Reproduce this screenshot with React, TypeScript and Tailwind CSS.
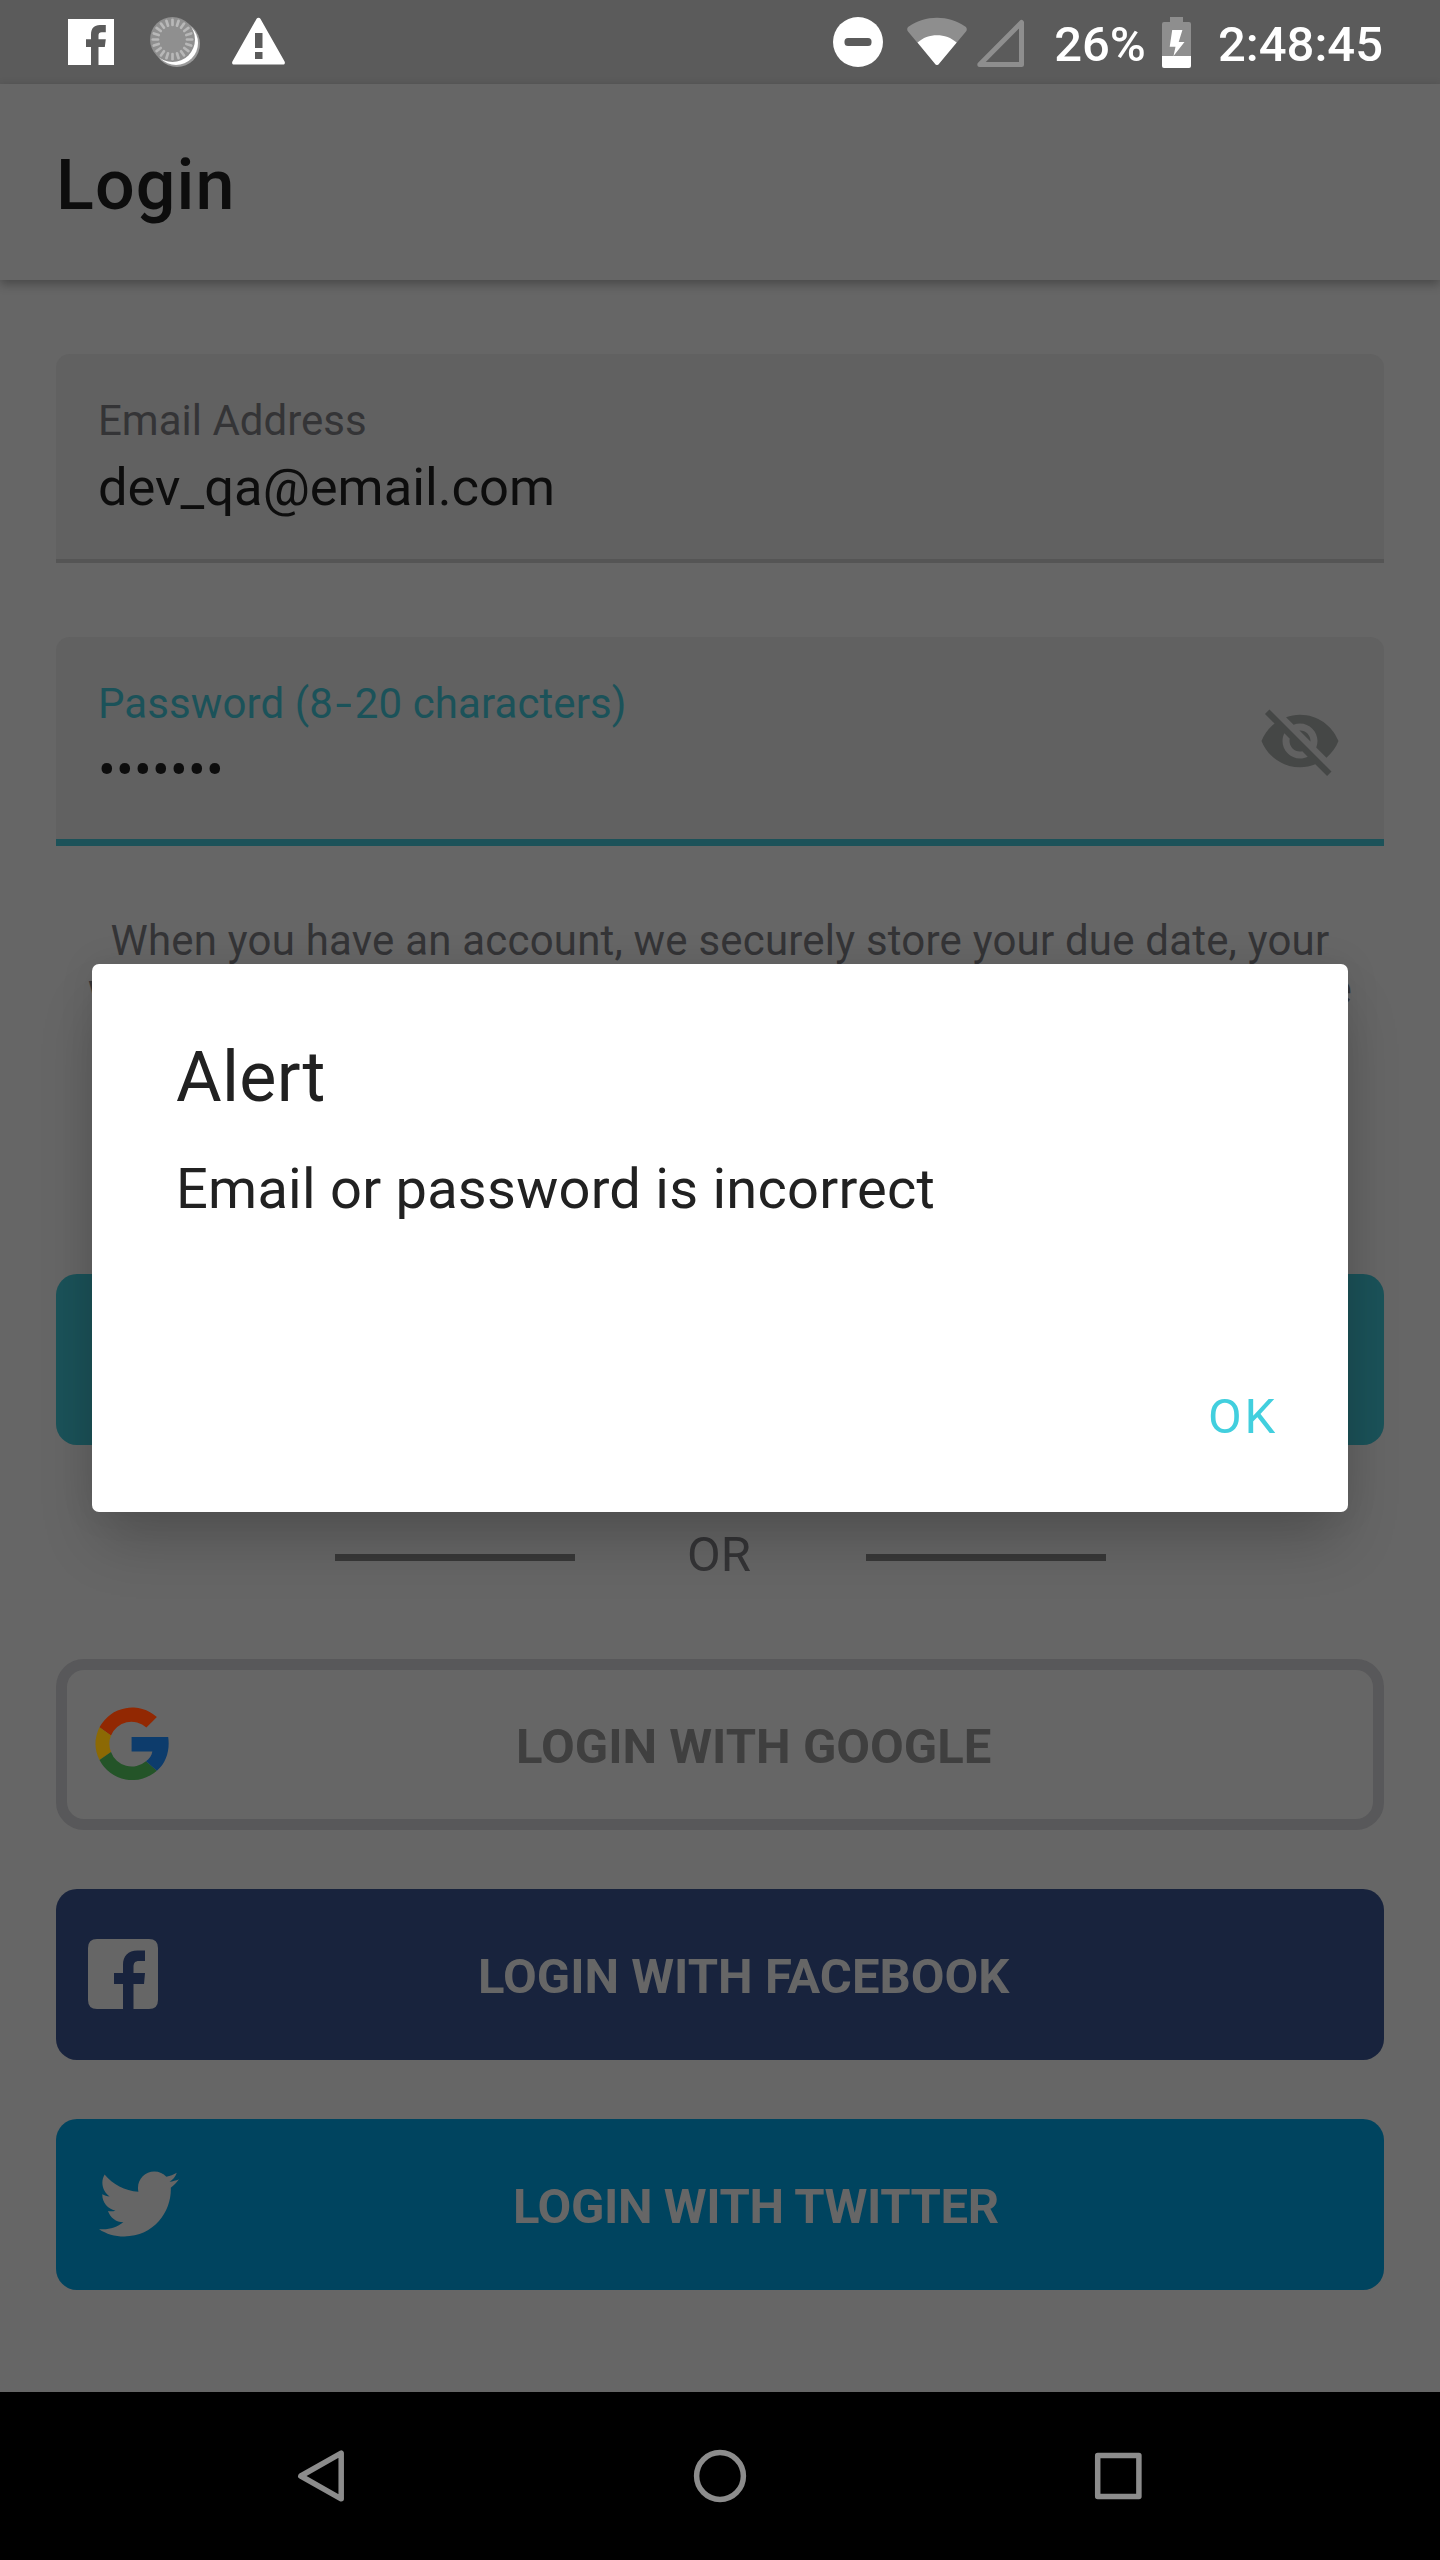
import type { ReactNode } from "react";
import { FaTwitter } from "react-icons/fa";

const TICKS = Array.from({ length: 20 }, (_, i) => i * 18);

function StatusBar() {
  return (
    <div className="flex h-[84px] shrink-0 items-center justify-between bg-[#5b5b5b] pl-[68px] pr-[57px] text-white">
      <div className="flex items-center">
        <svg className="size-[46px]" viewBox="0 0 46 46" fill="#fff">
          <path
            fillRule="evenodd"
            d="M0 0H46V46H30.5V28H36.8L37.8 20.3H30.5V16.5C30.5 14.3 31.5 13.3 33.8 13.3H37.8V6H32C26 6 23 9.5 23 15.5V20.3H18V28H23V46H0Z"
          />
        </svg>
        <svg className="ml-9 size-[50px]" viewBox="0 0 50 50">
          <circle cx="27" cy="27" r="23" fill="#9a9a9a" />
          <circle cx="26" cy="26" r="22" fill="#fff" />
          <circle cx="22.5" cy="22.5" r="22.5" fill="#8f8f8f" />
          {TICKS.map((a) => (
            <path key={a} d="M22.5 2.8V8" stroke="#b8b8b8" strokeWidth="2.7" strokeLinecap="round" transform={`rotate(${a} 22.5 22.5)`} />
          ))}
        </svg>
        <svg className="ml-8 h-[50px] w-[53px]" viewBox="0 0 53 50" fill="#fff">
          <path
            fillRule="evenodd"
            d="M24.6 1.8C25.4 .4 27.6 .4 28.4 1.8L52.6 44.4C53.4 46 52.6 47.6 50.8 47.6H2.2C.4 47.6 -.4 46 .4 44.4ZM23 16V31H30.5V16ZM23 35V42H30.5V35Z"
          />
        </svg>
      </div>
      <div className="flex items-center text-[49px] font-medium leading-[57px]">
        <svg className="size-[50px]" viewBox="0 0 50 50">
          <circle cx="25" cy="25" r="25" fill="#fff" />
          <rect x="11.5" y="21" width="27" height="8" rx="3.5" fill="#5b5b5b" />
        </svg>
        <svg className="ml-6 h-[50px] w-[60px]" viewBox="0 0 60 50">
          <path d="M1 14.5C-.3 12.7 0 10.7 1.8 9.4C18 -2.2 42 -2.2 58.2 9.4C60 10.7 60.3 12.7 59 14.5L32 46.8C31 48.4 29 48.4 28 46.8Z" fill="#8e8e8e" />
          <path d="M10.5 25.6C21 15.8 39 15.8 49.7 25.6L32 46.8C31 48.4 29 48.4 28 46.8Z" fill="#fff" />
        </svg>
        <svg className="ml-2.5 h-[50px] w-[47px]" viewBox="0 0 47 50">
          <path d="M44.5 5.5V47.5H2.8Z" fill="none" stroke="#8e8e8e" strokeWidth="5" strokeLinejoin="round" />
        </svg>
        <span className="ml-[30px] pt-[5px]">26%</span>
        <svg className="ml-4 h-[51px] w-[29px]" viewBox="0 0 29 51">
          <path d="M8 0H21V5H27Q29 5 29 7V39H0V7Q0 5 2 5H8Z" fill="#8e8e8e" />
          <path d="M0 39H29V49Q29 51 27 51H2Q0 51 0 49Z" fill="#fff" />
          <path d="M10.2 13H20.4L16.7 25H22.5L11.5 39L13.5 29.7H7.7Z" fill="#fff" />
        </svg>
        <span className="ml-[27px] pt-[5px]">2:48:45</span>
      </div>
    </div>
  );
}

function EyeOff() {
  return (
    <svg className="mt-[62px] size-[84px]" viewBox="0 0 24 24" fill="#454746">
      <path d="M12 7c2.76 0 5 2.24 5 5 0 .65-.13 1.26-.36 1.83l2.92 2.92c1.51-1.26 2.7-2.89 3.43-4.75-1.73-4.39-6-7.5-11-7.5-1.4 0-2.74.25-3.98.7l2.16 2.16C10.74 7.13 11.35 7 12 7zM2 4.27l2.28 2.28.46.46C3.08 8.3 1.78 10.02 1 12c1.73 4.39 6 7.5 11 7.5 1.55 0 3.03-.3 4.38-.84l.42.42L19.73 22 21 20.73 3.27 3 2 4.27zM7.53 9.8l1.55 1.55c-.05.21-.08.43-.08.65 0 1.66 1.34 3 3 3 .22 0 .44-.03.65-.08l1.55 1.55c-.67.33-1.41.53-2.2.53-2.76 0-5-2.24-5-5 0-.79.2-1.53.53-2.2zm4.31-.78l3.15 3.15.02-.16c0-1.66-1.34-3-3-3l-.17.01z" />
    </svg>
  );
}

function GoogleLogo() {
  return (
    <svg className="mb-0.5 h-[74px] w-[74px]" viewBox="0 0 74 74">
      <path d="M4.5 20.3A37 37 0 0 1 61.9 10L51.4 20.6A22 22 0 0 0 16 28.5Z" fill="#922802" />
      <path d="M4.5 20.3A37 37 0 0 0 4.5 53L16 45A22 22 0 0 1 16 28.5Z" fill="#8c6904" />
      <path d="M4.5 53A37 37 0 0 0 61.9 63.8L51 54.3A22 22 0 0 1 16 45Z" fill="#245428" />
      <path d="M36.6 30H73.2C75 43 71.5 55.5 61.9 63.8L51 54.3C54.5 52 56.6 48.5 57.4 44.5H36.6Z" fill="#0d3c6c" />
    </svg>
  );
}

function FacebookLogo() {
  return (
    <svg className="mb-0.5 size-[70px]" viewBox="0 0 70 70" fill="#666">
      <path
        fillRule="evenodd"
        d="M9 0H61Q70 0 70 9V61Q70 70 61 70H45.5V45H56L57 34H45.5V28C45.5 24 47 22 51 22H57V11.5H49.5C40 11.5 35 17 35 26V34H26V45H35V70H9Q0 70 0 61V9Q0 0 9 0Z"
      />
    </svg>
  );
}

function SocialButton({ className, textClass, icon, label }: { className: string; textClass: string; icon: ReactNode; label: string }) {
  return (
    <button className={`flex h-[171px] w-full shrink-0 items-center ${className}`}>
      {icon}
      <span className={`whitespace-nowrap pt-1 text-[49px] font-bold leading-[57px] ${textClass}`}>{label}</span>
    </button>
  );
}

function NavBar() {
  return (
    <div className="flex h-[168px] shrink-0 items-center justify-center bg-black">
      <div className="flex w-[399px] justify-center">
        <svg className="size-[54px]" viewBox="0 0 54 54" fill="none" stroke="#8c8c8c" strokeWidth="5.5" strokeLinejoin="round">
          <path d="M47.2 4.2V49.8L6.8 27Z" />
        </svg>
      </div>
      <div className="flex w-[399px] justify-center">
        <svg className="size-[54px]" viewBox="0 0 54 54" fill="none" stroke="#8c8c8c" strokeWidth="5.5">
          <circle cx="27" cy="27" r="23.4" />
        </svg>
      </div>
      <div className="flex w-[399px] justify-center">
        <svg className="size-[54px]" viewBox="0 0 54 54" fill="none" stroke="#8c8c8c" strokeWidth="5.5" strokeLinejoin="round">
          <rect x="5.7" y="6.4" width="41.2" height="41.2" />
        </svg>
      </div>
    </div>
  );
}

export default function App() {
  return (
    <div className="relative flex h-[2560px] w-[1440px] flex-col overflow-hidden bg-[#666] font-['Roboto',sans-serif]">
      <StatusBar />
      <header className="flex h-[196px] shrink-0 items-start px-14 pt-[60px] shadow-[0_4px_10px_rgba(0,0,0,0.3)]">
        <h1 className="text-[70px] font-medium leading-[82px] tracking-[1.1px] text-[#0d0d0d]">Login</h1>
      </header>

      <main className="flex grow flex-col px-14 pt-[74px]">
        <div className="h-[209px] shrink-0 rounded-t-[14px] border-b-4 border-[#555] bg-[#616161] px-[42px] pt-[42px]">
          <div className="text-[42px] leading-[49px] text-[#343436]">Email Address</div>
          <div className="mt-[11px] text-[52.5px] leading-[62px] text-[#0d0d0d]">dev_qa@email.com</div>
        </div>

        <div className="mt-[74px] flex h-[209px] shrink-0 justify-between rounded-t-[14px] border-b-[7px] border-[#1c5259] bg-[#616161] pl-[42px] pr-[42px]">
          <div className="pt-[42px]">
            <div className="text-[42px] leading-[49px] tracking-[0.1px] text-[#1b5259]">
              Password (8<span className="mx-[5px] inline-block scale-x-140">-</span>20 characters)
            </div>
            <div className="mt-[11px] text-[52.5px] leading-[62px] tracking-[0.3px] text-[#0d0d0d]">•••••••</div>
          </div>
          <EyeOff />
        </div>

        <div className="mt-[70px] h-[358px] shrink-0 whitespace-nowrap text-[42px] leading-[49px] tracking-[0.2px] text-[#343436]">
          <p className="text-center">When you have an account, we securely store your due date, your</p>
          <p className="mx-8 [text-align-last:justify]">weight, and your baby's information so that you never have the</p>
        </div>

        <div className="h-[171px] shrink-0 rounded-[21px] bg-[#1b5259]" />

        <div className="mt-[81px] flex h-[57px] shrink-0 items-center justify-center">
          <div className="mt-1.5 h-[7px] w-60 bg-[#383838]" />
          <div className="w-[291px] pr-0.5 text-center text-[49px] leading-[57px] text-[#343436]">OR</div>
          <div className="mt-1.5 h-[7px] w-60 bg-[#383838]" />
        </div>

        <SocialButton
          className="mt-[76px] rounded-[28px] border-[11px] border-[#58585a] pl-[28px]"
          textClass="ml-[347px] text-[#3f3f3f]"
          icon={<GoogleLogo />}
          label="LOGIN WITH GOOGLE"
        />
        <SocialButton
          className="mt-[59px] rounded-[21px] bg-[#18233d] pl-8"
          textClass="ml-[320px] text-[#666]"
          icon={<FacebookLogo />}
          label="LOGIN WITH FACEBOOK"
        />
        <SocialButton
          className="mt-[59px] rounded-[21px] bg-[#00445f] pl-[43px]"
          textClass="ml-[334px] tracking-[-0.4px] text-[#666]"
          icon={<FaTwitter className="mb-0.5 size-20" color="#666" />}
          label="LOGIN WITH TWITTER"
        />
      </main>

      <NavBar />

      <div className="absolute left-[92px] top-[964px] flex h-[548px] w-[1256px] flex-col rounded-[7px] bg-white pl-[84px] pr-[70px] pt-[72px] shadow-[0_36px_56px_-8px_rgba(0,0,0,0.2),0_0_36px_rgba(0,0,0,0.08)]">
        <h2 className="text-[70px] leading-[82px] tracking-[0.3px] text-[#212121]">Alert</h2>
        <p className="mt-[38px] text-[56px] leading-[66px] tracking-[0.24px] text-[#212121]">Email or password is incorrect</p>
        <button className="mt-[166px] self-end text-[49px] leading-[57px] tracking-[2.8px] text-[#42cfde]">OK</button>
      </div>
    </div>
  );
}
